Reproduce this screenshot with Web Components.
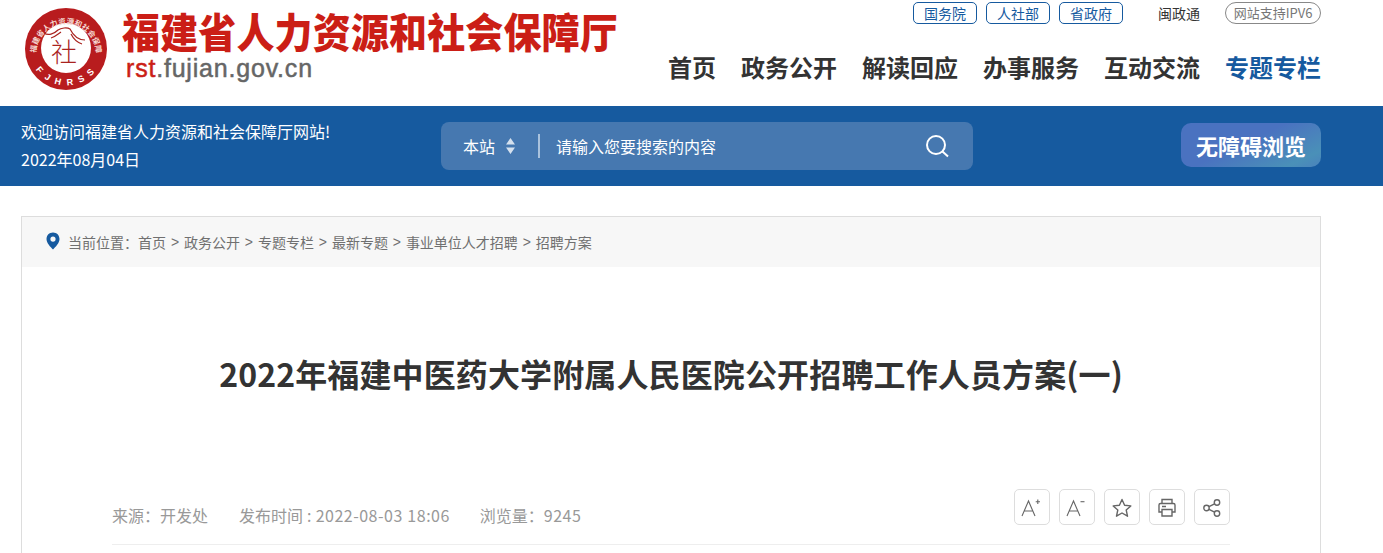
<!DOCTYPE html>
<html lang="zh-CN">
<head>
<meta charset="utf-8">
<title>2022年福建中医药大学附属人民医院公开招聘工作人员方案(一)</title>
<style>
  html, body { margin: 0; padding: 0; background: #fff; }
  body { font-family: "Noto Sans CJK SC", "Liberation Sans", sans-serif; color: #333; overflow: hidden; height: 553px; }
</style>
</head>
<body>
<site-header></site-header>
<search-band></search-band>
<article-box>
  <crumb-bar></crumb-bar>
  <article-head title-text="2022年福建中医药大学附属人民医院公开招聘工作人员方案(一)"></article-head>
</article-box>

<script>
// 顶部：徽标、站名、快捷链接和主导航
class SiteHeader extends HTMLElement {
  constructor() {
    super();
    this.attachShadow({ mode: 'open' });
    this.shadowRoot.innerHTML = `
      <style>
        :host { display: block; height: 106px; }
        .wrap { width: 1300px; margin-left: 21px; height: 106px; display: flex; justify-content: space-between; }
        .brand { display: flex; padding: 7px 0 0 3px; }
        .seal { width: 84px; height: 84px; flex: none; }
        .names { margin-left: 14px; }
        .cn { font: 900 38px/38px "Noto Sans CJK SC", sans-serif; letter-spacing: .15px; color: #cb1e16; margin-top: 3px; white-space: nowrap; transform: scaleY(1.08); transform-origin: top; }
        .url { font: 400 25px/28px "Liberation Sans", Arial, sans-serif; color: #666; margin: 6px 0 0 4px; -webkit-text-stroke: .5px #666; letter-spacing: .8px; }
        .url b { font-weight: 400; color: #cb1e16; -webkit-text-stroke: .5px #cb1e16; }
        .right { display: flex; flex-direction: column; align-items: flex-end; }
        .links { display: flex; align-items: center; margin-top: 2px; height: 22px; font-size: 14px; }
        .links a { box-sizing: border-box; width: 64px; height: 22px; line-height: 20px; text-align: center; border: 1px solid #165a9f; border-radius: 5px; color: #165a9f; margin-right: 9px; }
        .links a:nth-child(3) { margin-right: 35px; }
        .links span { color: #333; margin-right: 25px; }
        .links i { box-sizing: border-box; font-style: normal; width: 96px; height: 22px; line-height: 20px; text-align: center; border: 1px solid #888; border-radius: 11px; color: #777; font-size: 13px; white-space: nowrap; }
        nav { display: flex; gap: 25px; margin-top: 26px; font: 700 24px/34px "Noto Sans CJK SC", sans-serif; color: #333; }
        nav .on { color: #165a9f; }
      </style>
      <div class="wrap">
        <div class="brand">
          <svg class="seal" viewBox="0 0 84 84">
            <defs>
              <path id="top" d="M 12 47 A 30 30 0 1 1 72 47"></path>
              <path id="bot" d="M 10 60 A 37 37 0 0 0 74 60"></path>
            </defs>
            <circle cx="42" cy="42" r="41" fill="#b81c1e"></circle>
            <circle cx="42" cy="41" r="25" fill="#fff"></circle>
            <text font-family="Noto Sans CJK SC" font-size="7.6" font-weight="700" fill="#f4d6d0"><textPath href="#top" startOffset="1" textLength="100" lengthAdjust="spacing">福建省人力资源和社会保障厅</textPath></text>
            <text font-family="Liberation Sans" font-size="9" font-weight="700" fill="#fff"><textPath href="#bot" startOffset="3" textLength="68" lengthAdjust="spacing">FJHRSS</textPath></text>
            <!-- 屋檐 -->
            <path d="M20 26 C24 29 30 27 34 23 C37 21 43 20 46 22 C49 28 54 33 61 33 M27 31 C31 30 34 27 37 25 M47 27 C49 31 52 35 58 37" fill="none" stroke="#a9231f" stroke-width="1.2"></path>
            <text x="40" y="55" text-anchor="middle" font-family="Noto Sans CJK SC" font-size="26" font-weight="300" fill="#a9231f">社</text>
          </svg>
          <div class="names">
            <div class="cn">福建省人力资源和社会保障厅</div>
            <div class="url"><b>rst</b>.fujian.gov.cn</div>
          </div>
        </div>
        <div class="right">
          <div class="links">
            <a>国务院</a><a>人社部</a><a>省政府</a><span>闽政通</span><i>网站支持IPV6</i>
          </div>
          <nav>
            <div>首页</div><div>政务公开</div><div>解读回应</div><div>办事服务</div><div>互动交流</div><div class="on">专题专栏</div>
          </nav>
        </div>
      </div>
    `;
  }
}

// 蓝色条：欢迎语、搜索框、无障碍按钮
class SearchBand extends HTMLElement {
  constructor() {
    super();
    this.attachShadow({ mode: 'open' });
    this.shadowRoot.innerHTML = `
      <style>
        :host { display: block; height: 80px; background: #165a9f; color: #fff; }
        .wrap { width: 1300px; height: 80px; margin-left: 21px; display: flex; align-items: center; font-size: 16px; }
        .hello { width: 420px; line-height: 28px; margin-top: -3px; }
        .search { box-sizing: border-box; width: 532px; height: 48px; background: #4678b0; border-radius: 8px; display: flex; align-items: center; padding: 0 24px 0 22px; }
        .scope { display: flex; align-items: center; gap: 10px; }
        .scope svg { width: 11px; height: 18px; }
        .bar { width: 2px; height: 24px; background: #a9c2dd; margin: 0 16px 0 22px; }
        .hint { flex: 1; }
        .lens { width: 24px; height: 24px; }
        .free { box-sizing: border-box; width: 140px; height: 44px; margin: -2px 0 0 auto; border-radius: 10px; background: linear-gradient(155deg, #4a72c0 45%, #4a90b8 85%, #4a82bc); font: 700 22px/44px "Noto Sans CJK SC", sans-serif; text-align: center; }
      </style>
      <div class="wrap">
        <div class="hello">欢迎访问福建省人力资源和社会保障厅网站!<br>2022年08月04日</div>
        <div class="search">
          <div class="scope">本站
            <svg viewBox="0 0 11 18"><path d="M5.5 1 L10 7.5 H1 Z M5.5 17 L10 10.5 H1 Z" fill="#d5e1ee"></path></svg>
          </div>
          <div class="bar"></div>
          <div class="hint">请输入您要搜索的内容</div>
          <svg class="lens" viewBox="0 0 24 24" fill="none" stroke="#fff" stroke-width="2"><circle cx="11" cy="11" r="9"></circle><path d="M17.5 17.5 L23 22.5"></path></svg>
        </div>
        <div class="free">无障碍浏览</div>
      </div>
    `;
  }
}

// 正文外框
class ArticleBox extends HTMLElement {
  constructor() {
    super();
    this.attachShadow({ mode: 'open' });
    this.shadowRoot.innerHTML = `
      <style>
        :host { display: block; box-sizing: border-box; width: 1300px; margin: 30px 0 0 21px; border: 1px solid #ddd; border-bottom: 0; height: 337px; }
      </style>
      <slot></slot>
    `;
  }
}

// 面包屑
class CrumbBar extends HTMLElement {
  constructor() {
    super();
    this.attachShadow({ mode: 'open' });
    const items = ['首页', '政务公开', '专题专栏', '最新专题', '事业单位人才招聘', '招聘方案'];
    this.shadowRoot.innerHTML = `
      <style>
        :host { display: flex; align-items: center; height: 50px; background: #f7f7f7; padding-left: 24px; font-size: 14px; color: #707070; white-space: nowrap; }
        svg { width: 14px; height: 18px; margin-right: 8px; margin-top: -3px; }
        .sep { margin: 0 4.9px; font-family: "Liberation Sans", sans-serif; }
      </style>
      <svg viewBox="0 0 14 18"><path fill-rule="evenodd" fill="#165a9f" d="M7 0.5 C3.2 0.5 0.5 3.3 0.5 7 C0.5 11 4.5 15 7 17.5 C9.5 15 13.5 11 13.5 7 C13.5 3.3 10.8 0.5 7 0.5 Z M7 4.5 A2.6 2.6 0 1 1 7 9.7 A2.6 2.6 0 1 1 7 4.5 Z"></path></svg>
      <span>当前位置：</span>${items.map((t, i) => (i ? '<span class="sep">&gt;</span>' : '') + `<span>${t}</span>`).join('')}
    `;
  }
}

// 小方块工具按钮
class ToolBtn extends HTMLElement {
  constructor() {
    super();
    this.attachShadow({ mode: 'open' });
    this.shadowRoot.innerHTML = `
      <style>
        :host { display: flex; align-items: center; justify-content: center; box-sizing: border-box; width: 36px; height: 36px; border: 1px solid #ddd; border-radius: 5px; color: #666; }
        ::slotted(svg) { width: 22px; height: 22px; }
      </style>
      <slot></slot>
    `;
  }
}

// 标题和信息行
class ArticleHead extends HTMLElement {
  constructor() {
    super();
    this.attachShadow({ mode: 'open' });
    this.shadowRoot.innerHTML = `
      <style>
        :host { display: block; padding: 0 90px; }
        h1 { margin: 0; padding-top: 82px; height: 140px; font: 700 32px/48px "Noto Sans CJK SC", sans-serif; letter-spacing: .13px; color: #333; text-align: center; white-space: nowrap; }
        .meta { display: flex; justify-content: space-between; align-items: flex-start; height: 55px; border-bottom: 1px solid #eee; font-size: 16px; color: #999; }
        .info { display: flex; padding-top: 14px; line-height: 24px; }
        .from { margin-right: 31px; }
        .time { margin-right: 30px; word-spacing: .5px; }
        .num { letter-spacing: .5px; }
        .tools { display: flex; gap: 9px; }
      </style>
      <h1>${this.getAttribute('title-text') || ''}</h1>
      <div class="meta">
        <div class="info"><span class="from">来源：开发处</span><span class="time">发布时间 : <span class="num">2022-08-03 18:06</span></span><span>浏览量：<span class="num">9245</span></span></div>
        <div class="tools">
          <tool-btn><svg viewBox="0 0 22 22" fill="none" stroke="currentColor" stroke-width="1.1"><path d="M1 20 L7.5 5 L14 20 M3.2 15 H11.8"></path><path d="M14.7 5.7 H19 M16.8 3.5 V8"></path></svg></tool-btn>
          <tool-btn><svg viewBox="0 0 22 22" fill="none" stroke="currentColor" stroke-width="1.1"><path d="M1 20 L7.5 5 L14 20 M3.2 15 H11.8"></path><path d="M14.5 5.7 H18.5"></path></svg></tool-btn>
          <tool-btn><svg viewBox="0 0 22 22" fill="none" stroke="currentColor" stroke-width="1.4" stroke-linejoin="round"><path d="M11 3.5 L13.6 9.2 L19.8 9.9 L15.2 14 L16.5 20.2 L11 17 L5.5 20.2 L6.8 14 L2.2 9.9 L8.4 9.2 Z"></path></svg></tool-btn>
          <tool-btn><svg viewBox="0 0 22 22" fill="none" stroke="currentColor" stroke-width="1.4"><path d="M6 7.5 V3.5 H16 V7.5 M6 16 H3 V9 Q3 7.5 4.5 7.5 H17.5 Q19 7.5 19 9 V16 H16 M6 13.5 H16 V20 H6 Z M6 10.5 H10"></path></svg></tool-btn>
          <tool-btn><svg viewBox="0 0 22 22" fill="none" stroke="currentColor" stroke-width="1.4"><circle cx="5.5" cy="12" r="2.7"></circle><circle cx="16" cy="6.5" r="2.7"></circle><circle cx="16" cy="17.5" r="2.7"></circle><path d="M8 10.7 L13.6 7.8 M8 13.3 L13.6 16.2"></path></svg></tool-btn>
        </div>
      </div>
    `;
  }
}

customElements.define('tool-btn', ToolBtn);
customElements.define('site-header', SiteHeader);
customElements.define('search-band', SearchBand);
customElements.define('crumb-bar', CrumbBar);
customElements.define('article-head', ArticleHead);
customElements.define('article-box', ArticleBox);
</script>
</body>
</html>
